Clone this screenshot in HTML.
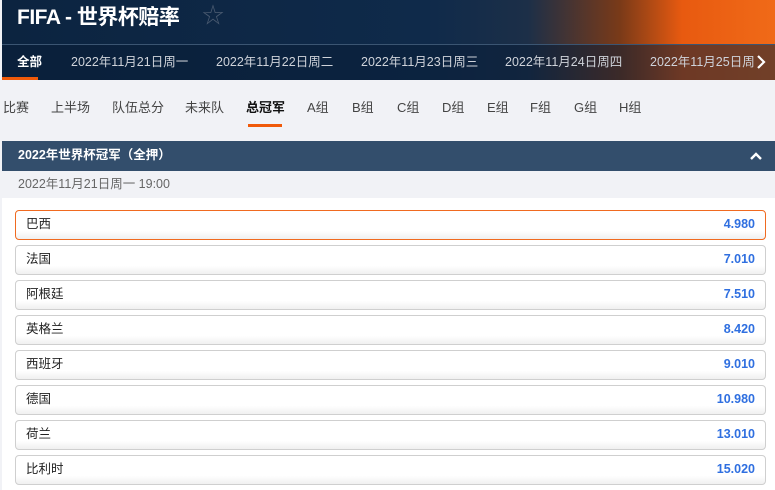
<!DOCTYPE html>
<html><head><meta charset="utf-8"><style>
*{margin:0;padding:0;box-sizing:border-box}
body{width:775px;height:490px;overflow:hidden;background:#f1f2f6;font-family:"Liberation Sans","Noto Sans CJK SC",sans-serif;position:relative;line-height:16px}
.hdr{position:absolute;left:2px;top:0;width:773px;height:80px;background:linear-gradient(90deg,#0c2440 0%,#0f2a4a 55%,#1c2f48 68%,#7a3a18 80%,#e85a10 88%,#f06a18 100%)}
.title{position:absolute;left:15px;top:6px;color:#fff;font-size:21px;font-weight:bold;letter-spacing:-0.5px;line-height:24px}
.star{position:absolute;left:200px;top:4px;color:#4a5a70;font-size:22px;line-height:24px}
.line{position:absolute;left:0;top:44px;width:773px;height:1px;background:#3b5572}
.tabs{position:absolute;left:0;top:45px;width:773px;height:35px;background:rgba(10,30,55,0.55)}
.tabs span{position:absolute;top:9px;font-size:12.5px;color:#cfd3da;white-space:nowrap}
.ul{position:absolute;left:0;top:77px;width:36px;height:3px;background:#f05a0a}
.nav{position:absolute;top:100px;font-size:13px;color:#444}
.sec{position:absolute;left:2px;top:141px;width:773px;height:30px;background:#334e6c;color:#fff;font-size:12.5px;font-weight:bold;padding:0 0 0 16px;line-height:29px}
.date{position:absolute;left:18px;top:176px;font-size:12.5px;color:#666}
.white{position:absolute;left:2px;top:198px;width:773px;height:292px;background:#fff}
.row{position:absolute;left:15px;width:751px;height:30px;border:1px solid #cfcfcf;border-radius:4px;background:linear-gradient(#fff 70%,#f0f0f0);font-size:12.5px;color:#222;line-height:26px}
.row .n{position:absolute;left:10px;top:0}
.row .o{position:absolute;right:10px;top:0;color:#2f6fe0;font-weight:bold}
</style></head><body>
<div class="hdr">
<div class="title">FIFA - 世界杯赔率</div><div class="star">☆</div>
<div class="line"></div>
<div class="tabs">
<span style="left:15px;color:#fff;font-weight:bold">全部</span>
<span style="left:69px">2022年11月21日周一</span>
<span style="left:214px">2022年11月22日周二</span>
<span style="left:359px">2022年11月23日周三</span>
<span style="left:503px">2022年11月24日周四</span>
<span style="left:648px;width:104px;overflow:hidden">2022年11月25日周五</span>
<svg style="position:absolute;left:753px;top:10px" width="12" height="14" viewBox="0 0 12 14"><path d="M3 1l6 6-6 6" stroke="#fff" stroke-width="2.2" fill="none"/></svg>
</div>
<div class="ul"></div>
</div>
<span class="nav" style="left:3px">比赛</span>
<span class="nav" style="left:51px">上半场</span>
<span class="nav" style="left:112px">队伍总分</span>
<span class="nav" style="left:185px">未来队</span>
<span class="nav" style="left:246px;color:#111;font-weight:bold">总冠军</span>
<div style="position:absolute;left:248px;top:124px;width:34px;height:3px;background:#f05a0a"></div>
<span class="nav" style="left:307px">A组</span>
<span class="nav" style="left:352px">B组</span>
<span class="nav" style="left:397px">C组</span>
<span class="nav" style="left:442px">D组</span>
<span class="nav" style="left:487px">E组</span>
<span class="nav" style="left:530px">F组</span>
<span class="nav" style="left:574px">G组</span>
<span class="nav" style="left:619px">H组</span>
<div class="sec">2022年世界杯冠军（全押）<svg style="position:absolute;right:12px;top:10px" width="14" height="10" viewBox="0 0 14 10"><path d="M2 8l5-5 5 5" stroke="#fff" stroke-width="2.4" fill="none"/></svg></div>
<div class="date">2022年11月21日周一 19:00</div>
<div class="white"></div>
<div class="row" style="top:210px;border-color:#f06a20"><span class="n">巴西</span><span class="o">4.980</span></div>
<div class="row" style="top:245px"><span class="n">法国</span><span class="o">7.010</span></div>
<div class="row" style="top:280px"><span class="n">阿根廷</span><span class="o">7.510</span></div>
<div class="row" style="top:315px"><span class="n">英格兰</span><span class="o">8.420</span></div>
<div class="row" style="top:350px"><span class="n">西班牙</span><span class="o">9.010</span></div>
<div class="row" style="top:385px"><span class="n">德国</span><span class="o">10.980</span></div>
<div class="row" style="top:420px"><span class="n">荷兰</span><span class="o">13.010</span></div>
<div class="row" style="top:455px"><span class="n">比利时</span><span class="o">15.020</span></div>
</body></html>
